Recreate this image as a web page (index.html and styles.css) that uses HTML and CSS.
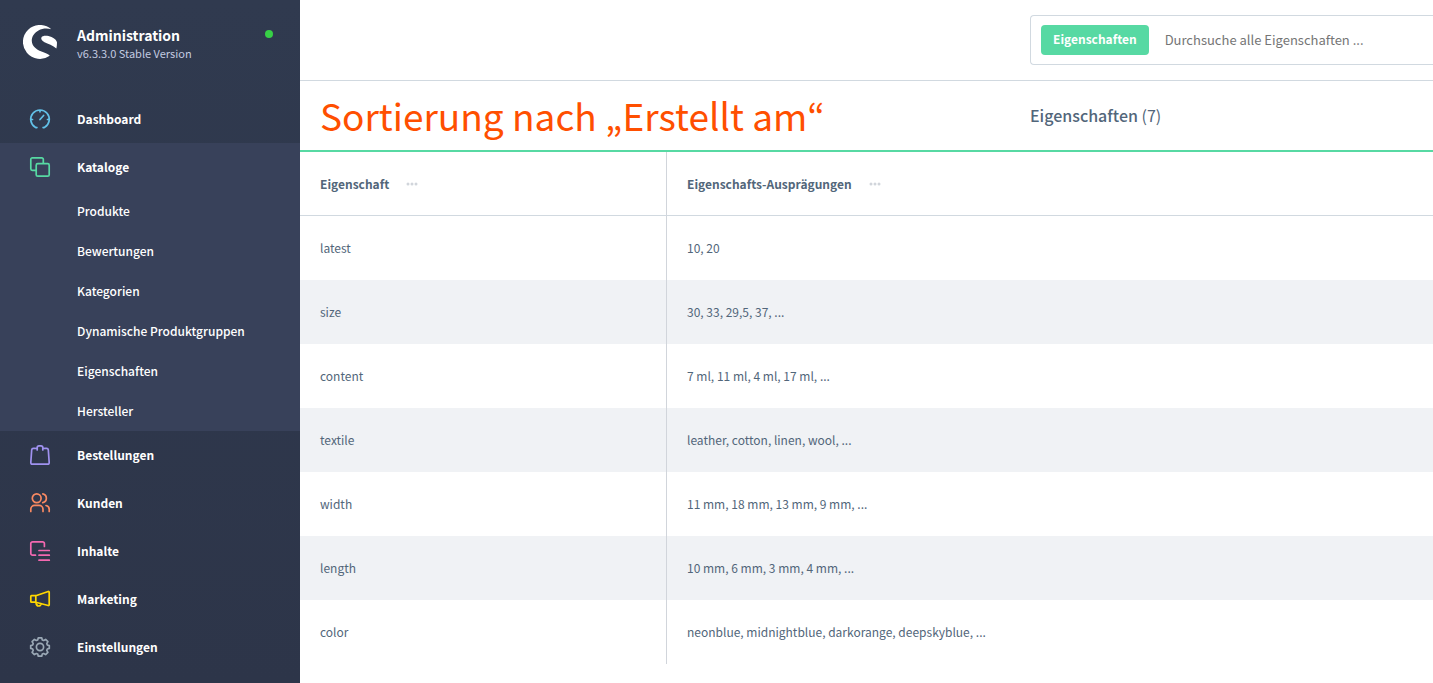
FILE: index.html
```html
<!DOCTYPE html>
<html lang="de">
<head>
<meta charset="utf-8">
<meta name="viewport" content="width=device-width, initial-scale=1">
<title>Eigenschaften | Administration</title>
<link rel="stylesheet" href="styles.css">
</head>
<body>
<div class="app">
  <aside class="sidebar">
    <header class="brand">
      <svg class="brand-logo" viewBox="0 0 34 34" aria-hidden="true">
        <path fill="#fff" d="M26.800 30.800A17 17 0 1 1 28.300 4.300C24.500 2.900 19.500 3.200 15.500 5.400C11 7.900 8.600 11.800 8.800 16C9 21.200 13 24.300 18.500 26.500C22 27.900 25.500 28.700 26.800 30.800Z"/>
        <path fill="#fff" d="M33.400 23.400C30 20.200 25 19 21.500 17.200C18.800 15.800 17.600 14 18.500 12.300C19.700 10.200 24.500 10.300 28.500 12C31.800 13.400 33.700 15.600 34 17.600C34 19.800 33.800 21.700 33.400 23.400Z"/>
      </svg>
      <div class="brand-text">
        <strong class="brand-name">Administration</strong>
        <span class="brand-version">v6.3.3.0 Stable Version</span>
      </div>
      <span class="status-dot"></span>
    </header>
    <nav class="nav">
      <a class="nav-link" href="#dashboard">
        <svg class="icon icon-blue" viewBox="0 0 20 20" aria-hidden="true"><path d="M6.900 18.500Q6.400 18.900 5.300 18.200A9.250 9.250 0 1 1 14.700 18.200Q13.600 18.900 13.100 18.500M10 1v1.800M.8 10.500h1.700M17.500 10.500h1.700M10 10.500l3.600-4"/></svg>
        Dashboard
      </a>
      <section class="nav-group">
        <a class="nav-link" href="#kataloge">
          <svg class="icon icon-green" viewBox="0 0 20 20" aria-hidden="true"><path d="M6 13.300H2.300A1.500 1.500 0 0 1 .8 11.800V2.300A1.500 1.500 0 0 1 2.300.8h9.500a1.500 1.500 0 0 1 1.500 1.500V6"/><rect x="6.200" y="6.700" width="13" height="12.500" rx="1.500"/></svg>
          Kataloge
        </a>
        <a class="nav-sub" href="#produkte">Produkte</a>
        <a class="nav-sub" href="#bewertungen">Bewertungen</a>
        <a class="nav-sub" href="#kategorien">Kategorien</a>
        <a class="nav-sub" href="#produktgruppen">Dynamische Produktgruppen</a>
        <a class="nav-sub" href="#eigenschaften">Eigenschaften</a>
        <a class="nav-sub" href="#hersteller">Hersteller</a>
      </section>
      <a class="nav-link" href="#bestellungen">
        <svg class="icon icon-purple" viewBox="0 0 20 20" aria-hidden="true"><path d="M4.800 3.300H3.300Q1.900 3.300 1.700 4.800L.8 17.500Q.8 19.200 2.400 19.200H17.600Q19.200 19.200 19.200 17.500L18.300 4.800Q18.100 3.300 16.700 3.300H15.200M7.200 5V2.800Q7.200.8 9 .8h2q1.800 0 1.800 2V5M7.200 3.300H5.800M12.800 3.300h1.400"/></svg>
        Bestellungen
      </a>
      <a class="nav-link" href="#kunden">
        <svg class="icon icon-orange" viewBox="0 0 20 20" aria-hidden="true"><circle cx="6.700" cy="5.300" r="4.400"/><path d="M.8 18.500v-2.300a3.800 3.800 0 0 1 3.800-3.800h4.600a3.800 3.800 0 0 1 3.800 3.800v2.300M12.800.9a4.500 4.500 0 0 1 0 8.800M16 12.500a3.800 3.800 0 0 1 3.200 3.700v2.300"/></svg>
        Kunden
      </a>
      <a class="nav-link" href="#inhalte">
        <svg class="icon icon-pink" viewBox="0 0 20 20" aria-hidden="true"><path d="M5.500 14.200H2.600A1.800 1.800 0 0 1 .8 12.400V2.600A1.800 1.800 0 0 1 2.600.8h10a1.800 1.800 0 0 1 1.800 1.800V5.500M9 9.500h10.300M9 14.200h10.300M9 19.200h10.300"/></svg>
        Inhalte
      </a>
      <a class="nav-link" href="#marketing">
        <svg class="icon icon-yellow" viewBox="0 0 20 20" aria-hidden="true"><path d="M5.800 6.700 18.200 2.500q1-.2 1 .7v12.600q0 .9-1 .7L5.800 13.200ZM5.800 6.700H1.500q-.7 0-.7.7v5.100q0 .7.700.7h4.300M6 13.400q.2 3.600 2.600 3.600 1.900 0 2.500-2.300"/></svg>
        Marketing
      </a>
      <a class="nav-link" href="#einstellungen">
        <svg class="icon icon-gray" viewBox="0 0 20 20" aria-hidden="true"><circle cx="10" cy="10" r="3.600"/><path d="M8.300.8h3.400l.6 2.200 1.300.5 2-1.100 2.300 2.300-1.100 2 .5 1.300 2 .6v2.800l-2 .6-.5 1.300 1.100 2-2.300 2.300-2-1.100-1.300.5-.6 2.200H8.300L7.700 17l-1.300-.5-2 1.100-2.300-2.300 1.100-2L2.700 12l-2-.6V8.600l2-.6.500-1.300-1.100-2 2.300-2.300 2 1.100L7.700 3Z"/></svg>
        Einstellungen
      </a>
    </nav>
  </aside>
  <main class="main">
    <div class="topbar">
      <form class="search" role="search">
        <button class="search-tag" type="button">Eigenschaften</button>
        <input class="search-input" type="search" aria-label="Suche" placeholder="Durchsuche alle Eigenschaften ...">
      </form>
    </div>
    <div class="headbar">
      <h1 class="note">Sortierung nach „Erstellt am“</h1>
      <h2 class="page-title">Eigenschaften <span class="count">(7)</span></h2>
    </div>
    <table class="grid">
      <thead>
        <tr>
          <th class="col-name" scope="col"><span class="head">Eigenschaft <button class="more" type="button" aria-label="Spaltenoptionen"><svg class="dots" viewBox="0 0 12 4" aria-hidden="true"><circle cx="2" cy="2" r="1.500"/><circle cx="6" cy="2" r="1.500"/><circle cx="10" cy="2" r="1.500"/></svg></button></span></th>
          <th scope="col"><span class="head">Eigenschafts-Ausprägungen <button class="more" type="button" aria-label="Spaltenoptionen"><svg class="dots" viewBox="0 0 12 4" aria-hidden="true"><circle cx="2" cy="2" r="1.500"/><circle cx="6" cy="2" r="1.500"/><circle cx="10" cy="2" r="1.500"/></svg></button></span></th>
        </tr>
      </thead>
      <tbody>
        <tr><td>latest</td><td>10, 20</td></tr>
        <tr><td>size</td><td>30, 33, 29,5, 37, ...</td></tr>
        <tr><td>content</td><td>7 ml, 11 ml, 4 ml, 17 ml, ...</td></tr>
        <tr><td>textile</td><td>leather, cotton, linen, wool, ...</td></tr>
        <tr><td>width</td><td>11 mm, 18 mm, 13 mm, 9 mm, ...</td></tr>
        <tr><td>length</td><td>10 mm, 6 mm, 3 mm, 4 mm, ...</td></tr>
        <tr><td>color</td><td>neonblue, midnightblue, darkorange, deepskyblue, ...</td></tr>
      </tbody>
    </table>
  </main>
</div>
</body>
</html>
```

FILE: styles.css
```css
* { box-sizing: border-box; }

body {
  margin: 0;
  background: #fff;
  color: #52667a;
  font-family: "Noto Sans CJK KR", "Noto Sans", sans-serif;
  font-size: 12px;
  line-height: 20px;
}

a { color: inherit; text-decoration: none; }
button, input { font: inherit; }

.app { display: flex; min-height: 100vh; }

.sidebar {
  flex: 0 0 300px;
  background: linear-gradient(#303a4f, #2d3549);
  color: #fff;
}

.brand {
  display: flex;
  align-items: flex-start;
  height: 95px;
  padding: 25px 27px 0 23px;
}
.brand-logo { width: 34px; height: 34px; margin-right: 20px; }
.brand-text { display: flex; flex: 1; flex-direction: column; }
.brand-name { font-size: 14px; line-height: 20px; }
.brand-version { color: #c3cbe0; font-size: 11px; line-height: 16px; }
.status-dot {
  width: 8px;
  height: 8px;
  margin-top: 5px;
  border-radius: 50%;
  background: #37d046;
}

.nav-link {
  display: flex;
  align-items: center;
  gap: 27px;
  height: 48px;
  padding-left: 30px;
  font-weight: 700;
}
.nav-group { background: #38415a; }
.nav-sub {
  display: block;
  padding: 10px 0 10px 77px;
  font-weight: 500;
}

.icon {
  width: 20px;
  height: 20px;
  fill: none;
  stroke-width: 1.7;
  stroke-linecap: round;
  stroke-linejoin: round;
  overflow: visible;
}
.icon-blue { stroke: #62c1e8; }
.icon-green { stroke: #57d9a3; }
.icon-purple { stroke: #a092f0; }
.icon-orange { stroke: #f88962; }
.icon-pink { stroke: #f368b0; }
.icon-yellow { stroke: #ffd700; }
.icon-gray { stroke: #9aa8b5; }

.main { flex: 1; min-width: 0; }

.topbar, .headbar {
  display: grid;
  grid-template-columns: 730fr 403fr;
  align-items: center;
}
.topbar {
  padding: 15px 0;
  border-bottom: 1px solid #d1d9e0;
}
.search {
  grid-column: 2;
  display: flex;
  align-items: center;
  height: 50px;
  padding-left: 10px;
  border: 1px solid #d1d9e0;
  border-right: 0;
  border-radius: 4px 0 0 4px;
}
.search-tag {
  height: 30px;
  padding: 0 12px 2px;
  border: 0;
  border-radius: 4px;
  background: #57d9a3;
  color: #fff;
  font-weight: 700;
}
.search-input {
  flex: 1;
  min-width: 0;
  padding: 0 0 0 16px;
  border: 0;
  outline: 0;
  background: transparent;
  color: #52667a;
  font-size: 13px;
}
.search-input::placeholder { color: #757575; }

.headbar {
  height: 71px;
  padding-bottom: 2px;
  border-bottom: 2px solid #57d9a3;
}
.note {
  margin: 0;
  padding-left: 20px;
  color: #ff4f00;
  font-size: 37px;
  font-weight: 400;
  line-height: 60px;
  white-space: nowrap;
}
.page-title {
  margin: 0;
  font-size: 16px;
  font-weight: 500;
  line-height: 24px;
}
.count { font-weight: 400; }

.grid {
  width: 100%;
  border-collapse: separate;
  border-spacing: 0;
  table-layout: fixed;
}
.col-name { width: 367px; }
.grid th, .grid td {
  height: 64px;
  padding: 0 20px;
  text-align: left;
  vertical-align: middle;
}
.grid th { border-bottom: 1px solid #d1d9e0; }
.grid th:first-child, .grid td:first-child { border-right: 1px solid #d1d5db; }
.grid tbody tr:nth-child(even) { background: #f0f2f5; }

.head { display: flex; align-items: center; gap: 16px; }
.more { display: flex; padding: 0; border: 0; background: none; }
.dots { width: 14px; height: 4px; fill: #d1d5db; }
```
